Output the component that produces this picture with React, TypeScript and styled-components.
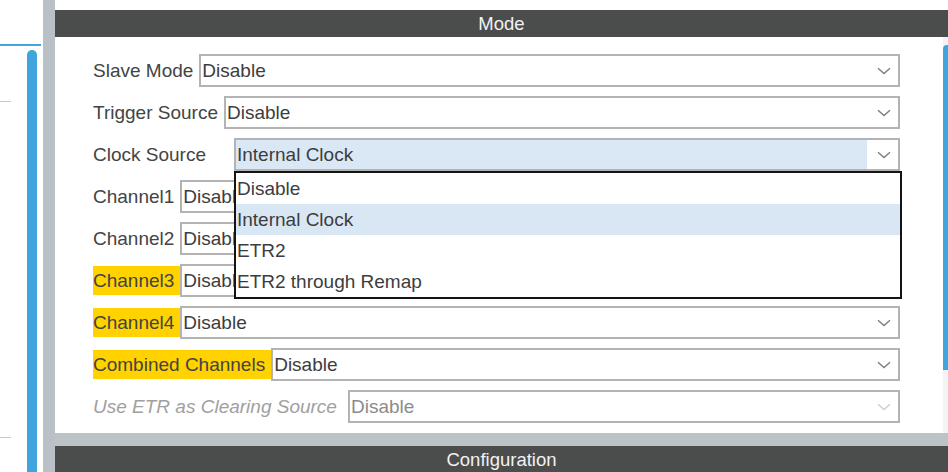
import React from "react";
import styled, { createGlobalStyle } from "styled-components";

const Global = createGlobalStyle`
  html, body { margin: 0; padding: 0; background: #ffffff; overflow: hidden; }
  body { font-family: "Liberation Sans", Arial, sans-serif; }
  * { box-sizing: border-box; }
`;

const Frame = styled.div`
  display: flex;
  width: 948px;
  height: 472px;
  overflow: hidden;
`;

const LeftPane = styled.div`
  width: 43px;
  flex: none;
  display: flex;
  flex-direction: column;
  background: #ffffff;
`;

const LeftTop = styled.div`
  height: 44px;
  flex: none;
`;

const BlueRule = styled.div`
  height: 2px;
  width: 41px;
  background: #3fa5dc;
  flex: none;
`;

const LeftBody = styled.div`
  flex: 1;
  display: flex;
  padding-top: 4px;
`;

const LeftList = styled.div`
  width: 27px;
  display: flex;
  flex-direction: column;
`;

const Divider = styled.div<{ $top: number }>`
  width: 11px;
  height: 1px;
  background: #c9c9c9;
  margin-top: ${(p) => p.$top}px;
`;

const LeftThumb = styled.div`
  width: 10px;
  background: #3fa5dc;
  border-radius: 5px 5px 0 0;
`;

const Gutter = styled.div`
  width: 12px;
  flex: none;
  background: #b9c1c6;
`;

const Main = styled.div`
  flex: 1;
  display: flex;
  flex-direction: column;
  background: #bcc3c7;
`;

const TopStrip = styled.div`
  height: 10px;
  background: #ffffff;
  flex: none;
`;

const Header = styled.div`
  height: 27px;
  flex: none;
  background: #4b4d4d;
  color: #f2f2f2;
  font-size: 18.5px;
  display: flex;
  align-items: center;
  justify-content: center;
`;

const Body = styled.div`
  height: 396px;
  flex: none;
  background: #ffffff;
  display: flex;
`;

const Form = styled.div`
  flex: 1;
  padding: 17px 43px 0 38px;
  display: flex;
  flex-direction: column;
  gap: 9px;
`;

const ScrollTrack = styled.div`
  width: 5px;
  background: #f3f3f3;
  padding-top: 8px;
`;

const ScrollThumb = styled.div`
  height: 325px;
  background: #3fa5dc;
  border-radius: 4px 0 0 0;
`;

const BottomGap = styled.div`
  height: 13px;
  flex: none;
`;

const Row = styled.div`
  display: flex;
  align-items: center;
  height: 33px;
`;

const Label = styled.span<{ $hl?: boolean; $disabled?: boolean; $w?: number }>`
  flex: none;
  font-size: 19px;
  line-height: 29px;
  padding-right: 6px;
  white-space: nowrap;
  color: ${(p) => (p.$disabled ? "#a0a0a0" : "#444444")};
  font-style: ${(p) => (p.$disabled ? "italic" : "normal")};
  background: ${(p) => (p.$hl ? "#ffd200" : "transparent")};
  ${(p) => (p.$w ? `width: ${p.$w}px;` : "")}
`;

const SelectBox = styled.div`
  flex: 1;
  height: 33px;
  border: 2px solid #b3b3b3;
  display: flex;
  position: relative;
  background: #ffffff;
`;

const Value = styled.div<{ $active?: boolean; $disabled?: boolean }>`
  flex: 1;
  padding-left: 1px;
  font-size: 19px;
  line-height: 29px;
  white-space: nowrap;
  color: ${(p) => (p.$disabled ? "#8c8c8c" : "#3d3d3d")};
  background: ${(p) => (p.$active ? "#dae8f5" : "#ffffff")};
`;

const ArrowZone = styled.div`
  width: 31px;
  display: flex;
  align-items: center;
  justify-content: center;
  padding-left: 2px;
`;

const Popup = styled.div`
  position: absolute;
  top: calc(100% + 2px);
  left: -2px;
  right: -4px;
  background: #ffffff;
  border: 2px solid #141414;
  z-index: 5;
  display: flex;
  flex-direction: column;
`;

const Option = styled.div<{ $sel?: boolean }>`
  height: 31px;
  padding-left: 1px;
  font-size: 19px;
  line-height: 32px;
  color: #3d3d3d;
  background: ${(p) => (p.$sel ? "#d9e7f5" : "#ffffff")};
`;

const Chevron = ({ light }: { light?: boolean }) => (
  <svg width="14" height="8" viewBox="0 0 14 8">
    <path
      d="M1 1.2 L7 6.6 L13 1.2"
      fill="none"
      stroke={light ? "#cfcfcf" : "#7d7d7d"}
      strokeWidth="1.4"
    />
  </svg>
);

type Field = {
  label: string;
  value: string;
  hl?: boolean;
  disabled?: boolean;
  labelWidth?: number;
  open?: boolean;
};

const fields: Field[] = [
  { label: "Slave Mode", value: "Disable" },
  { label: "Trigger Source", value: "Disable" },
  { label: "Clock Source", value: "Internal Clock", labelWidth: 141, open: true },
  { label: "Channel1", value: "Disable" },
  { label: "Channel2", value: "Disable" },
  { label: "Channel3", value: "Disable", hl: true },
  { label: "Channel4", value: "Disable", hl: true },
  { label: "Combined Channels", value: "Disable", hl: true },
  { label: "Use ETR as Clearing Source", value: "Disable", disabled: true, labelWidth: 255 },
];

const options = ["Disable", "Internal Clock", "ETR2", "ETR2 through Remap"];

export default function App() {
  return (
    <>
      <Global />
      <Frame>
        <LeftPane>
          <LeftTop />
          <BlueRule />
          <LeftBody>
            <LeftList>
              <Divider $top={51} />
              <Divider $top={335} />
            </LeftList>
            <LeftThumb />
          </LeftBody>
        </LeftPane>
        <Gutter />
        <Main>
          <TopStrip />
          <Header>Mode</Header>
          <Body>
            <Form>
              {fields.map((f) => (
                <Row key={f.label}>
                  <Label $hl={f.hl} $disabled={f.disabled} $w={f.labelWidth}>
                    {f.label}
                  </Label>
                  <SelectBox>
                    <Value $active={f.open} $disabled={f.disabled}>
                      {f.value}
                    </Value>
                    <ArrowZone>
                      <Chevron light={f.disabled} />
                    </ArrowZone>
                    {f.open && (
                      <Popup>
                        {options.map((o) => (
                          <Option key={o} $sel={o === f.value}>
                            {o}
                          </Option>
                        ))}
                      </Popup>
                    )}
                  </SelectBox>
                </Row>
              ))}
            </Form>
            <ScrollTrack>
              <ScrollThumb />
            </ScrollTrack>
          </Body>
          <BottomGap />
          <Header>Configuration</Header>
        </Main>
      </Frame>
    </>
  );
}
